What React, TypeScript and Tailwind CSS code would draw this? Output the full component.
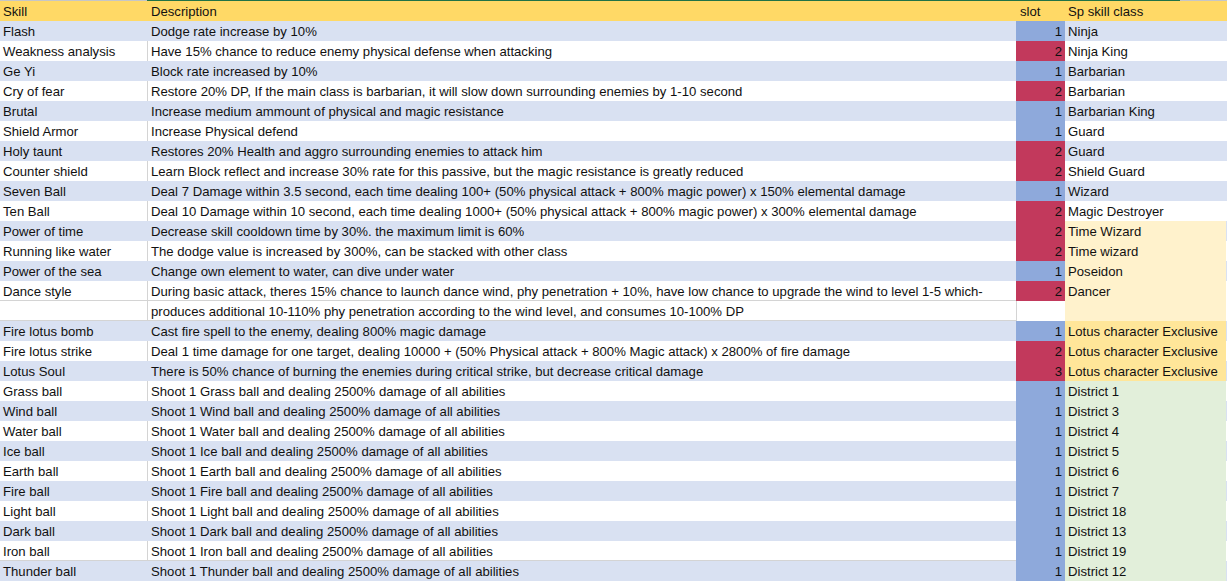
import React from 'react'

type Row = {
  skill: string
  desc: string
  slot: number | null
  cls: string
  stripe: 'blue' | 'white'
  clsBg?: string
  line?: boolean
}

const rows: Row[] = [
  { skill: 'Flash', desc: 'Dodge rate increase by 10%', slot: 1, cls: 'Ninja', stripe: 'blue' },
  { skill: 'Weakness analysis', desc: 'Have 15% chance to reduce enemy physical defense when attacking', slot: 2, cls: 'Ninja King', stripe: 'white' },
  { skill: 'Ge Yi', desc: 'Block rate increased by 10%', slot: 1, cls: 'Barbarian', stripe: 'blue' },
  { skill: 'Cry of fear', desc: 'Restore 20% DP, If the main class is barbarian, it will slow down surrounding enemies by 1-10 second', slot: 2, cls: 'Barbarian', stripe: 'white' },
  { skill: 'Brutal', desc: 'Increase medium ammount of physical and magic resistance', slot: 1, cls: 'Barbarian King', stripe: 'blue' },
  { skill: 'Shield Armor', desc: 'Increase Physical defend', slot: 1, cls: 'Guard', stripe: 'white' },
  { skill: 'Holy taunt', desc: 'Restores 20% Health and aggro surrounding enemies to attack him', slot: 2, cls: 'Guard', stripe: 'blue' },
  { skill: 'Counter shield', desc: 'Learn Block reflect and increase 30% rate for this passive, but the magic resistance is greatly reduced', slot: 2, cls: 'Shield Guard', stripe: 'white' },
  { skill: 'Seven Ball', desc: 'Deal 7 Damage within 3.5 second, each time dealing 100+ (50% physical attack + 800% magic power) x 150% elemental damage', slot: 1, cls: 'Wizard', stripe: 'blue' },
  { skill: 'Ten Ball', desc: 'Deal 10 Damage within 10 second, each time dealing 1000+ (50% physical attack + 800% magic power) x 300% elemental damage', slot: 2, cls: 'Magic Destroyer', stripe: 'white' },
  { skill: 'Power of time', desc: 'Decrease skill cooldown time by 30%. the maximum limit is 60%', slot: 2, cls: 'Time Wizard', stripe: 'blue', clsBg: 'bg-[#fff2cc]' },
  { skill: 'Running like water', desc: 'The dodge value is increased by 300%, can be stacked with other class', slot: 2, cls: 'Time wizard', stripe: 'white', clsBg: 'bg-[#fff2cc]' },
  { skill: 'Power of the sea', desc: 'Change own element to water, can dive under water', slot: 1, cls: 'Poseidon', stripe: 'blue', clsBg: 'bg-[#fff2cc]' },
  { skill: 'Dance style', desc: 'During basic attack, theres 15% chance to launch dance wind, phy penetration + 10%, have low chance to upgrade the wind to level 1-5 which-', slot: 2, cls: 'Dancer', stripe: 'white', clsBg: 'bg-[#fff2cc]', line: true },
  { skill: '', desc: 'produces additional 10-110% phy penetration according to the wind level, and consumes 10-100% DP', slot: null, cls: '', stripe: 'white', clsBg: 'bg-[#fff2cc]', line: true },
  { skill: 'Fire lotus bomb', desc: 'Cast fire spell to the enemy, dealing 800% magic damage', slot: 1, cls: 'Lotus character Exclusive', stripe: 'blue', clsBg: 'bg-[#ffe699]' },
  { skill: 'Fire lotus strike', desc: 'Deal 1 time damage for one target, dealing 10000 + (50% Physical attack + 800% Magic attack) x 2800% of fire damage', slot: 2, cls: 'Lotus character Exclusive', stripe: 'white', clsBg: 'bg-[#ffe699]' },
  { skill: 'Lotus Soul', desc: 'There is 50% chance of burning the enemies during critical strike, but decrease critical damage', slot: 3, cls: 'Lotus character Exclusive', stripe: 'blue', clsBg: 'bg-[#ffe699]' },
  { skill: 'Grass ball', desc: 'Shoot 1 Grass ball and dealing 2500% damage of all abilities', slot: 1, cls: 'District 1', stripe: 'white', clsBg: 'bg-[#e2efda]' },
  { skill: 'Wind ball', desc: 'Shoot 1 Wind ball and dealing 2500% damage of all abilities', slot: 1, cls: 'District 3', stripe: 'blue', clsBg: 'bg-[#e2efda]' },
  { skill: 'Water ball', desc: 'Shoot 1 Water ball and dealing 2500% damage of all abilities', slot: 1, cls: 'District 4', stripe: 'white', clsBg: 'bg-[#e2efda]' },
  { skill: 'Ice ball', desc: 'Shoot 1 Ice ball and dealing 2500% damage of all abilities', slot: 1, cls: 'District 5', stripe: 'blue', clsBg: 'bg-[#e2efda]' },
  { skill: 'Earth ball', desc: 'Shoot 1 Earth ball and dealing 2500% damage of all abilities', slot: 1, cls: 'District 6', stripe: 'white', clsBg: 'bg-[#e2efda]' },
  { skill: 'Fire ball', desc: 'Shoot 1 Fire ball and dealing 2500% damage of all abilities', slot: 1, cls: 'District 7', stripe: 'blue', clsBg: 'bg-[#e2efda]' },
  { skill: 'Light ball', desc: 'Shoot 1 Light ball and dealing 2500% damage of all abilities', slot: 1, cls: 'District 18', stripe: 'white', clsBg: 'bg-[#e2efda]' },
  { skill: 'Dark ball', desc: 'Shoot 1 Dark ball and dealing 2500% damage of all abilities', slot: 1, cls: 'District 13', stripe: 'blue', clsBg: 'bg-[#e2efda]' },
  { skill: 'Iron ball', desc: 'Shoot 1 Iron ball and dealing 2500% damage of all abilities', slot: 1, cls: 'District 19', stripe: 'white', clsBg: 'bg-[#e2efda]', line: true },
  { skill: 'Thunder ball', desc: 'Shoot 1 Thunder ball and dealing 2500% damage of all abilities', slot: 1, cls: 'District 12', stripe: 'blue', clsBg: 'bg-[#e2efda]' },
]

function slotBg(slot: number | null) {
  if (slot === null) return 'bg-white border-l border-[#d4d4d4]'
  if (slot === 1) return 'bg-[#8ea9db]'
  return 'bg-[#c2395c]'
}

export default function App() {
  return (
    <div className="w-[1227px] h-[581px] overflow-hidden bg-white text-[13.15px] leading-[21px] text-[#111] font-['Liberation_Sans',Arial,sans-serif]">
      {/* header */}
      <div className="flex h-[1px]">
        <div className="w-[147px] bg-[#c6c6c6]" />
        <div className="w-[1033px] bg-[#217346]" />
        <div className="flex-1 bg-[#c6c6c6]" />
      </div>
      <div className="flex h-[20px] overflow-hidden bg-[#ffd966]">
        <div className="w-[148px] shrink-0 pl-[3px]">Skill</div>
        <div className="w-[868px] shrink-0 pl-[3px]">Description</div>
        <div className="w-[49px] shrink-0 pl-[4px]">slot</div>
        <div className="w-[161px] shrink-0 pl-[3px]">Sp skill class</div>
        <div className="flex-1" />
      </div>

      {rows.map((r, i) => {
        const stripe = r.stripe === 'blue' ? 'bg-[#d9e1f2]' : 'bg-white'
        const white = r.stripe === 'white'
        return (
          <div key={i} className={`flex h-[20px] overflow-hidden ${stripe}`}>
            <div
              className={`w-[148px] shrink-0 pl-[3px] whitespace-nowrap overflow-hidden ${white ? 'border-r border-[#d4d4d4]' : ''} ${r.line ? 'border-b border-[#d4d4d4]' : ''}`}
            >
              {r.skill}
            </div>
            <div className={`w-[868px] shrink-0 pl-[3px] whitespace-nowrap overflow-hidden ${r.line ? 'border-b border-[#d4d4d4]' : ''}`}>
              {r.desc}
            </div>
            <div className={`w-[49px] shrink-0 pr-[3px] text-right ${slotBg(r.slot)}`}>{r.slot ?? ''}</div>
            <div className={`w-[161px] shrink-0 pl-[3px] whitespace-nowrap overflow-hidden ${r.clsBg ?? ''}`}>{r.cls}</div>
            <div className="flex-1" />
          </div>
        )
      })}
    </div>
  )
}
